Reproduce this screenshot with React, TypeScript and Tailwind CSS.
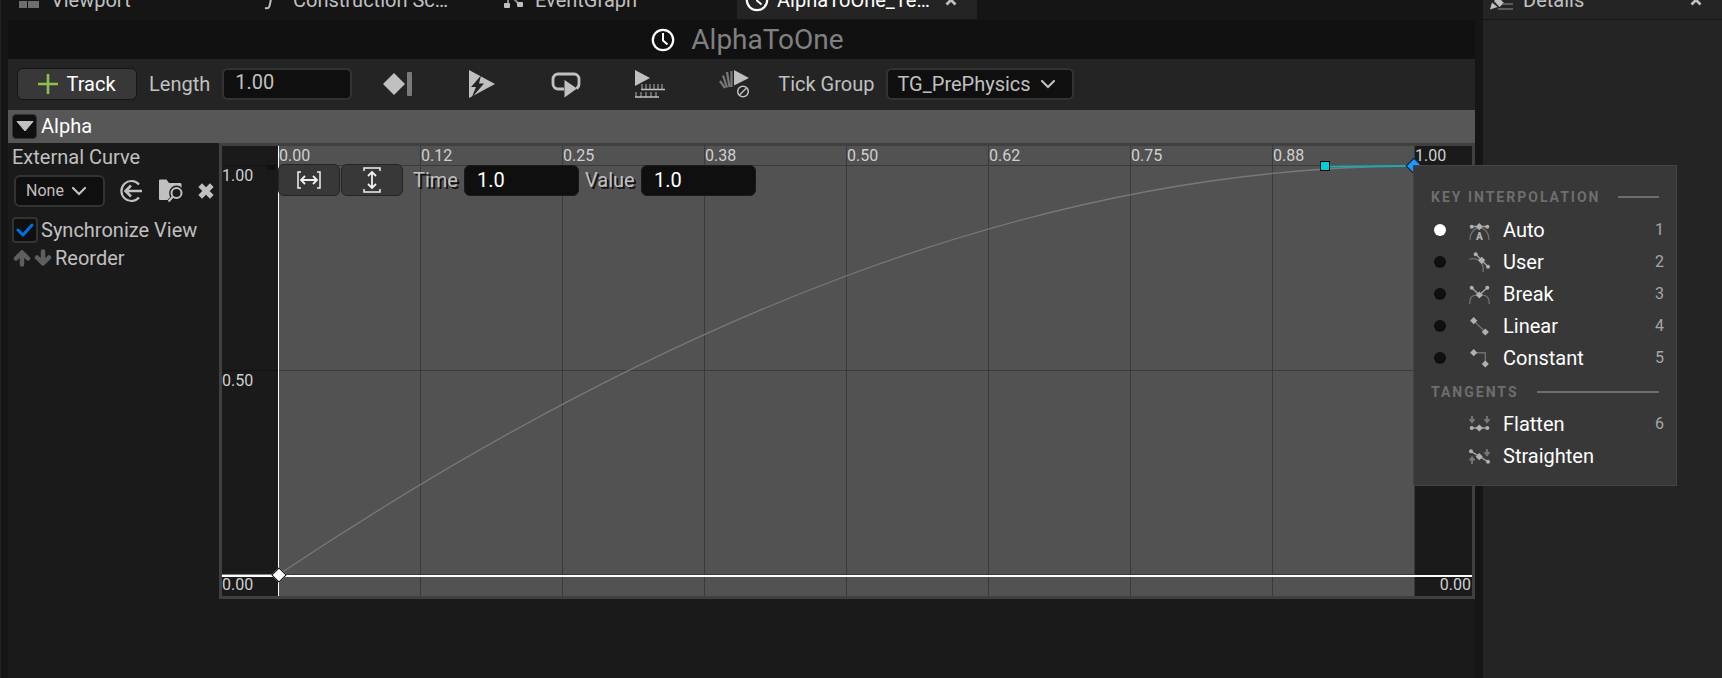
import React from "react";

type IconProps = { children: React.ReactNode; w?: number; h?: number; className?: string };

const Svg: React.FC<IconProps> = ({ children, w = 30, h = 28, className = "" }) => (
  <svg
    width={w}
    height={h}
    viewBox={`0 0 ${w} ${h}`}
    fill="none"
    aria-hidden="true"
    className={`shrink-0 ${className}`}
  >
    {children}
  </svg>
);

const Clock: React.FC<{ className?: string }> = ({ className }) => (
  <Svg w={24} h={24} className={className}>
    <circle cx="12" cy="12" r="10.2" stroke="#fff" strokeWidth="2.2" />
    <path d="M12 5v7.5l4.5 4" stroke="#fff" strokeWidth="2" />
  </Svg>
);

const Close = () => (
  <Svg w={12} h={12}>
    <path d="M1.5 1.5l9 9M10.5 1.5l-9 9" stroke="#c0c0c0" strokeWidth="2.8" />
  </Svg>
);

const Chevron = () => (
  <Svg w={16} h={10} className="pointer-events-none">
    <path d="M2 2l6 6 6-6" stroke="#c0c0c0" strokeWidth="2.2" strokeLinecap="round" />
  </Svg>
);

/* ---------- Tabs ---------- */

const ViewportIcon = () => (
  <Svg w={24} h={24}>
    <path d="M-3 0h11v11h-11zM9 0h11v11H9zM-3 13h11v7h-11zM9 13h11v7H9z" fill="#6e6e6e" />
  </Svg>
);

const FunctionIcon = () => (
  <Svg w={24} h={24}>
    <path d="M15 2c-3 0-3.500 1-4.200 5l-1.800 9c-.8 4-1.500 4.500-5 4" stroke="#c0c0c0" strokeWidth="2" />
    <path d="M6 9h8" stroke="#c0c0c0" strokeWidth="2" />
  </Svg>
);

const GraphIcon = () => (
  <Svg w={24} h={24}>
    <path d="M5 16V5l12 12" stroke="#8a8a8a" strokeWidth="2" />
    <rect x="2" y="2" width="6" height="6" rx="1" fill="#c0c0c0" />
    <rect x="1" y="15" width="6" height="5" rx="1" fill="#c0c0c0" />
    <rect x="14" y="14" width="6" height="5" rx="1" fill="#c0c0c0" />
  </Svg>
);

const DetailsIcon = () => (
  <Svg w={24} h={24}>
    <path d="M0 21.500l2-7 5.500 4.500zM4 13l4-4 6 6-4.500 4z" fill="#c0c0c0" />
    <path d="M14 11h9M12 16h11M8 21h15" stroke="#6e6e6e" strokeWidth="1.500" />
  </Svg>
);

const Tab: React.FC<{ icon: React.ReactNode; title: string; active?: boolean }> = ({ icon, title, active }) => (
  <div
    className={`flex h-[38px] w-60 items-center gap-2 px-2 ${
      active ? "bg-[#242424] text-white" : "text-[#c0c0c0]"
    }`}
  >
    {icon}
    <button type="button" className="w-40 text-left">
      {title}
    </button>
    {active && (
      <button type="button" aria-label="Close tab">
        <Close />
      </button>
    )}
  </div>
);

/* ---------- Toolbar ---------- */

const LastKeyIcon = () => (
  <Svg>
    <path d="M11 3l11 11-11 11L0 14z" fill="#c0c0c0" />
    <rect x="24" y="2" width="5" height="24" rx="1" fill="#7a7a7a" />
  </Svg>
);

const AutoPlayIcon = () => (
  <Svg>
    <path d="M2 0l26 14L2 28z" fill="#c0c0c0" />
    <path d="M14 5.500L4 17h5l-4.500 11L17 13.500h-5z" fill="#242424" />
  </Svg>
);

const LoopIcon = () => (
  <Svg>
    <path
      d="M13 19H7a5 5 0 0 1-5-5V9a5 5 0 0 1 5-5h16a5 5 0 0 1 5 5v5c0 2-1 3.500-2.500 4.500"
      stroke="#c0c0c0"
      strokeWidth="2.800"
    />
    <path d="M13.500 10L26 18.500 13.500 27.500z" fill="#c0c0c0" />
  </Svg>
);

const TimelineLengthIcon = () => (
  <Svg>
    <path d="M0 0l15 8L0 16z" fill="#c0c0c0" />
    <path
      d="M7 14v5M11 14v5M15 14v5M19 14v5M23 14v5M27 14v5M1 22v5M6 22v5M11 22v5M16 22v5M21 22v5"
      stroke="#808080"
      strokeWidth="1.500"
    />
    <path d="M6 19.500h24M0 27h24" stroke="#c0c0c0" strokeWidth="1.500" />
  </Svg>
);

const IgnoreDilationIcon = () => (
  <Svg>
    <path d="M15 0l15 8-15 7.500z" fill="#c0c0c0" />
    <path
      d="M12.500 1v16M8 2l2.500 15M4 5.500L8 17.500M1 11l5 7"
      stroke="#787878"
      strokeWidth="2.200"
    />
    <circle cx="24" cy="21.500" r="5.300" stroke="#c0c0c0" strokeWidth="1.500" />
    <path d="M20.500 25l7-7" stroke="#c0c0c0" strokeWidth="1.500" />
  </Svg>
);

const tools = [
  { label: "Use Last Keyframe", icon: <LastKeyIcon /> },
  { label: "AutoPlay", icon: <AutoPlayIcon /> },
  { label: "Loop", icon: <LoopIcon /> },
  { label: "Replicated", icon: <TimelineLengthIcon /> },
  { label: "Ignore Time Dilation", icon: <IgnoreDilationIcon /> },
];

const Toolbar = () => (
  <div className="flex h-[51px] items-center bg-[#242424] pb-[2px] pl-[9px] text-[#c0c0c0]">
    <button
      type="button"
      className="flex h-8 w-[120px] items-center justify-center gap-2 rounded-md border border-[#151515] bg-[#383838] text-white"
    >
      <Svg w={20} h={20}>
        <path d="M10 0v20M0 10h20" stroke="#8bc24a" strokeWidth="2.600" />
      </Svg>
      Track
    </button>
    <label htmlFor="length" className="ml-3">
      Length
    </label>
    <input
      id="length"
      defaultValue="1.00"
      className="ml-3 h-8 w-[130px] rounded-md border-2 border-[#333] bg-[#0f0f0f] px-[11px] pb-1"
    />
    <div className="ml-1 flex">
      {tools.map((tool) => (
        <button
          key={tool.label}
          type="button"
          aria-label={tool.label}
          className="flex h-8 w-[84px] items-center justify-center"
        >
          {tool.icon}
        </button>
      ))}
    </div>
    <label htmlFor="tick-group" className="pl-[2px]">
      Tick Group
    </label>
    <div className="ml-3 grid items-center">
      <select
        id="tick-group"
        className="col-start-1 row-start-1 h-8 w-[188px] appearance-none rounded-md border-2 border-[#333] bg-[#0f0f0f] pl-[9px]"
      >
        <option>TG_PrePhysics</option>
      </select>
      <div className="pointer-events-none col-start-1 row-start-1 justify-self-end pr-[18px]">
        <Chevron />
      </div>
    </div>
  </div>
);

/* ---------- Track side panel ---------- */

const UseCurveIcon = () => (
  <Svg w={24} h={24}>
    <path d="M20 5.500A10 10 0 1 0 20 18.500" stroke="#c0c0c0" strokeWidth="2.200" />
    <path d="M23 12H7M12 6.500L6.500 12l5.500 5.500" stroke="#c0c0c0" strokeWidth="2.600" />
  </Svg>
);

const BrowseIcon = () => (
  <Svg w={24} h={24}>
    <path d="M0 1.500Q0 .5 1 .5h6.500L10 4h11.500q1 0 1 1.500V21H1q-1 0-1-1z" fill="#c0c0c0" />
    <circle cx="17.500" cy="14" r="7.400" fill="#1a1a1a" />
    <path d="M6 24l6-7h12v7z" fill="#1a1a1a" />
    <circle cx="17.500" cy="14" r="5" stroke="#c0c0c0" strokeWidth="2" />
    <path d="M14 17.500l-4.500 5" stroke="#c0c0c0" strokeWidth="2.200" />
  </Svg>
);

const ClearIcon = () => (
  <Svg w={16} h={16}>
    <path d="M2.200 2.200l11.600 11.600M13.800 2.200L2.200 13.800" stroke="#c0c0c0" strokeWidth="5.200" />
  </Svg>
);

const MoveArrow: React.FC<{ className?: string }> = ({ className }) => (
  <Svg w={18} h={18} className={className}>
    <path d="M9 15.500V5M3 9.500L9 3.500l6 6" stroke="#5e5e5e" strokeWidth="4.500" strokeLinecap="round" strokeLinejoin="round" />
  </Svg>
);

const TrackPanel = () => (
  <div className="w-[211px] shrink-0 pl-1 text-[#c0c0c0]">
    <div className="flex h-7 items-center">External Curve</div>
    <div className="mt-1 flex h-8 items-center pl-[2px]">
      <div className="grid items-center">
        <select
          aria-label="External Curve"
          className="col-start-1 row-start-1 h-8 w-[91px] appearance-none rounded-md border-2 border-[#333] bg-[#0f0f0f] pl-[10px] text-base"
        >
          <option>None</option>
        </select>
        <div className="pointer-events-none col-start-1 row-start-1 justify-self-end pr-[18px]">
          <Chevron />
        </div>
      </div>
      <div className="flex flex-1 items-center justify-between pr-[5px] pl-[14px]">
        <button type="button" aria-label="Use selected curve">
          <UseCurveIcon />
        </button>
        <button type="button" aria-label="Browse to curve">
          <BrowseIcon />
        </button>
        <button type="button" aria-label="Clear curve">
          <ClearIcon />
        </button>
      </div>
    </div>
    <label className="mt-[10px] flex h-[26px] items-center gap-[3px]">
      <span className="grid items-center justify-items-center">
        <input
          type="checkbox"
          defaultChecked
          className="col-start-1 row-start-1 size-[26px] appearance-none rounded border-2 border-[#333] bg-[#0f0f0f]"
        />
        <Svg w={18} h={14} className="pointer-events-none col-start-1 row-start-1">
          <path d="M2 7l5 5 9-10" stroke="#0070e0" strokeWidth="3" strokeLinecap="round" strokeLinejoin="round" />
        </Svg>
      </span>
      Synchronize View
    </label>
    <div className="mt-px flex h-7 items-center gap-[3px] pl-[1px]">
      <button type="button" aria-label="Move track up">
        <MoveArrow />
      </button>
      <button type="button" aria-label="Move track down">
        <MoveArrow className="rotate-180" />
      </button>
      Reorder
    </div>
  </div>
);

/* ---------- Interpolation menu ---------- */

const dot = (x: number, y: number) => <circle cx={x} cy={y} r="2" fill="#b0b0b0" />;
const key = (x: number, y: number) => (
  <path d={`M${x} ${y - 3.6}l3.600 3.600-3.600 3.600-3.600-3.600z`} fill="#b0b0b0" />
);

const modes = [
  {
    name: "Auto",
    icon: (
      <>
        <path d="M3 7.500h15" stroke="#a0a0a0" strokeWidth="1.500" />
        <path d="M1 21c0-6 3-11 9-12.500M20 21c0-6-3-11-9-12.500" stroke="#6e6e6e" strokeWidth="1.400" />
        {dot(2.7, 7.7)}
        {key(10.3, 7.7)}
        {dot(18.3, 7.7)}
        <text x="10.300" y="21" textAnchor="middle" fontSize="10" fontWeight="900" fill="#b0b0b0">
          A
        </text>
      </>
    ),
  },
  {
    name: "User",
    icon: (
      <>
        <path d="M.5 8c9-2 15 4 13.500 13" stroke="#6e6e6e" strokeWidth="1.400" />
        <path d="M6.700 3.300L19 15.700" stroke="#a0a0a0" strokeWidth="1.500" />
        {dot(6.7, 3.3)}
        {key(12.7, 9.3)}
        {dot(19, 15.7)}
      </>
    ),
  },
  {
    name: "Break",
    icon: (
      <>
        <path d="M.7 21c0-7 3-10 9.600-8.500C17 11 20.300 14 20.300 21" stroke="#6e6e6e" strokeWidth="1.400" />
        <path d="M2.700 4.700l7.600 7.300 8-7.300" stroke="#a0a0a0" strokeWidth="1.500" />
        {dot(2.7, 4.7)}
        {key(10.3, 12)}
        {dot(18.3, 4.7)}
      </>
    ),
  },
  {
    name: "Linear",
    icon: (
      <>
        <path d="M4.700 5.700L16.300 17" stroke="#6e6e6e" strokeWidth="1.400" />
        {key(4.7, 5.7)}
        {key(16.3, 17)}
      </>
    ),
  },
  {
    name: "Constant",
    icon: (
      <>
        <path d="M4.700 5.700h11.600V17" stroke="#6e6e6e" strokeWidth="1.400" />
        {key(4.7, 5.7)}
        {key(16.3, 17)}
      </>
    ),
  },
];

const FlattenIcon = () => (
  <Svg w={22} h={22}>
    <path d="M3 3v6M.5 6L3 9.200 5.500 6M18 3v6M15.500 6L18 9.200 20.500 6" stroke="#787878" strokeWidth="1.800" />
    <path d="M2.700 15h15.600" stroke="#a0a0a0" strokeWidth="1.400" />
    {dot(2.7, 15)}
    {key(10.3, 15)}
    {dot(18.3, 15)}
  </Svg>
);

const StraightenIcon = () => (
  <Svg w={22} h={22}>
    <path d="M18 4v6M15.500 7L18 10.200 20.500 7M3 19v-6M.5 15.500L3 12.300l2.500 3.200" stroke="#787878" strokeWidth="1.800" />
    <path d="M2 6.300l17 10.400" stroke="#a0a0a0" strokeWidth="1.400" />
    {dot(2, 6.3)}
    {key(10.3, 11.7)}
    {dot(19, 16.7)}
  </Svg>
);

const MenuHeading: React.FC<{ children: string }> = ({ children }) => (
  <div className="flex h-8 items-center gap-[18px] px-[17px] text-sm font-bold tracking-[2px] text-[#6e6e6e] uppercase">
    {children}
    <div className="h-[2px] flex-1 bg-[#6e6e6e]" />
  </div>
);

const KeyMenu = () => (
  <div className="absolute top-[19px] left-full z-10 -ml-px w-[264px] border border-[#444] bg-[#383838] pt-[15px] pb-[13px] text-white">
    <MenuHeading>Key Interpolation</MenuHeading>
    <div className="pt-px pb-[2px]">
      {modes.map((mode, i) => (
        <label key={mode.name} className="flex h-8 items-center pr-3 pl-5">
          <input
            type="radio"
            name="interpolation"
            defaultChecked={i === 0}
            className="size-3 appearance-none rounded-full bg-[#0f0f0f] checked:bg-white"
          />
          <Svg w={22} h={22} className="mr-3 ml-[23px]">
            {mode.icon}
          </Svg>
          <span className="flex-1">{mode.name}</span>
          <span className="text-base text-[#a6a6a6]">{i + 1}</span>
        </label>
      ))}
    </div>
    <MenuHeading>Tangents</MenuHeading>
    <button type="button" className="flex h-8 w-full items-center gap-3 pr-3 pl-[55px] text-left">
      <FlattenIcon />
      <span className="flex-1">Flatten</span>
      <span className="text-base text-[#a6a6a6]">6</span>
    </button>
    <button type="button" className="flex h-8 w-full items-center gap-3 pr-3 pl-[55px] text-left">
      <StraightenIcon />
      Straighten
    </button>
  </div>
);

/* ---------- Curve editor ---------- */

const times = ["0.00", "0.12", "0.25", "0.38", "0.50", "0.62", "0.75", "0.88"];

const CurveDrawing = () => (
  <svg
    viewBox="0 0 1136 450"
    preserveAspectRatio="none"
    fill="none"
    aria-hidden="true"
    className="absolute inset-0 size-full overflow-visible"
  >
    {[1, 2, 3, 4, 5, 6, 7, 8].map((i) => (
      <path key={i} d={`M${i * 142 + 0.5} 0V450`} stroke="#3a3a3a" />
    ))}
    <path d="M0 19.500H1136M0 224.500H1136M0 428.500H1136" stroke="#3a3a3a" />
    <path d="M-56 19.500H0M-56 224.500H0" stroke="#121212" />
    <rect x="-11" y="19" width="8" height="5" fill="#111" />
    <path d="M0 429C379 176 757 21 1136 20" stroke="#787878" strokeWidth="1.300" />
    <path d="M-56 428.500H0" stroke="#808080" />
    <path d="M-56 430H1194" stroke="#fff" strokeWidth="2" />
    <path d="M.5 0V450" stroke="#fff" />
    <path d="M1052 20.500L1130 20" stroke="#1fa9b0" strokeWidth="1.800" />
  </svg>
);

const CurveTools = () => (
  <div className="relative flex h-[30px] items-center">
    <button
      type="button"
      aria-label="Fit horizontally"
      className="flex h-8 w-[62px] items-center justify-center rounded-md border border-[#242424] bg-[#383838]"
    >
      <Svg w={24} h={18}>
        <path d="M4 1H1v16h3M20 1h3v16h-3" stroke="#f0f0f0" strokeWidth="1.500" />
        <path d="M4 9h16M8 5L4 9l4 4M16 5l4 4-4 4" stroke="#f0f0f0" strokeWidth="1.800" />
      </Svg>
    </button>
    <button
      type="button"
      aria-label="Fit vertically"
      className="ml-px flex h-8 w-[62px] items-center justify-center rounded-md border border-[#242424] bg-[#383838]"
    >
      <Svg w={18} h={26}>
        <path d="M1 4V1h16v3M1 22v3h16v-3" stroke="#f0f0f0" strokeWidth="1.500" />
        <path d="M9 5v16M5 9l4-4 4 4M5 17l4 4 4-4" stroke="#f0f0f0" strokeWidth="1.800" />
      </Svg>
    </button>
    <label htmlFor="key-time" className="ml-[10px] w-[51px] text-[#c0c0c0] [text-shadow:2px_2px_0_#111]">
      Time
    </label>
    <input
      id="key-time"
      defaultValue="1.0"
      className="h-[31px] w-[115px] rounded-md border border-[#1a1a1a] bg-[#0f0f0f] px-3 text-white"
    />
    <label htmlFor="key-value" className="ml-[6px] w-14 text-[#c0c0c0] [text-shadow:2px_2px_0_#111]">
      Value
    </label>
    <input
      id="key-value"
      defaultValue="1.0"
      className="h-[31px] w-[115px] rounded-md border border-[#1a1a1a] bg-[#0f0f0f] px-3 text-white"
    />
  </div>
);

const CurveEditor = () => (
  <div className="flex h-[456px] flex-1 border-3 border-[#404040] text-base leading-5 text-[#d0d0d0]">
    <div className="flex h-[449px] w-14 flex-col justify-between pt-5">
      <span>1.00</span>
      <span>0.50</span>
      <span>0.00</span>
    </div>
    <div className="relative flex-1 bg-[#525252] text-xl leading-6">
      <CurveDrawing />
      <div className="relative grid h-[19px] grid-cols-8 text-base leading-5">
        {times.map((t) => (
          <span key={t} className="pl-px">
            {t}
          </span>
        ))}
      </div>
      <CurveTools />
      {/* Keys and tangent handle */}
      <div className="absolute top-[429px] left-px size-[11px] -translate-x-1/2 -translate-y-1/2 rotate-45 border border-[#111] bg-white" />
      <div className="absolute top-5 left-full size-3 -translate-x-1/2 -translate-y-1/2 rotate-45 border border-[#111] bg-[#1e96ff]" />
      <div className="absolute top-5 left-[92.2%] size-[10px] -translate-x-1/2 -translate-y-1/2 border border-black bg-[#00ced8]" />
      <KeyMenu />
    </div>
    <div className="relative flex h-[449px] w-[58px] flex-col justify-between pr-px pl-px">
      <span>1.00</span>
      <span className="text-right">0.00</span>
    </div>
  </div>
);

const App = () => {
  return (
    <div className="flex min-h-screen border-l border-[#222] bg-[#151515] pl-[7px] font-[Roboto,sans-serif] text-xl leading-6">
      <main className="flex min-w-0 flex-1 flex-col">
        {/* Document tabs */}
        <div className="h-5 overflow-hidden">
          <div className="-mt-[19px] flex gap-[2px] pl-[3px]">
            <Tab icon={<ViewportIcon />} title="Viewport" />
            <Tab icon={<FunctionIcon />} title="Construction Sc…" />
            <Tab icon={<GraphIcon />} title="EventGraph" />
            <Tab icon={<Clock />} title="AlphaToOne_Te…" active />
          </div>
        </div>

        {/* Timeline name */}
        <div className="flex h-[39px] items-center justify-center gap-4 bg-[#111] pl-3">
          <Clock />
          <h1 className="text-[28px] text-[#808080]">AlphaToOne</h1>
        </div>

        <Toolbar />

        <section className="flex flex-1 flex-col bg-[#1a1a1a]">
          <div className="flex h-[33px] items-center gap-1 bg-[#575757] pb-px pl-1 text-white">
            <button
              type="button"
              aria-label="Collapse Alpha"
              className="flex size-[25px] items-center justify-center rounded border border-[#333] bg-[#0f0f0f]"
            >
              <Svg w={18} h={10}>
                <path d="M1 .5h16L9 10z" fill="#c0c0c0" stroke="#c0c0c0" strokeLinejoin="round" />
              </Svg>
            </button>
            <h2>Alpha</h2>
          </div>
          <div className="flex">
            <TrackPanel />
            <CurveEditor />
          </div>
        </section>
      </main>

      <aside className="ml-2 w-[239px] shrink-0 bg-[#242424]">
        <div className="h-5 overflow-hidden border-b border-[#151515]">
          <div className="-mt-[19px] flex h-[38px] items-center gap-[9px] pr-5 pl-[7px] text-[#c0c0c0]">
            <DetailsIcon />
            <span className="flex-1">Details</span>
            <button type="button" aria-label="Close details">
              <Close />
            </button>
          </div>
        </div>
      </aside>
    </div>
  );
};

export default App;
